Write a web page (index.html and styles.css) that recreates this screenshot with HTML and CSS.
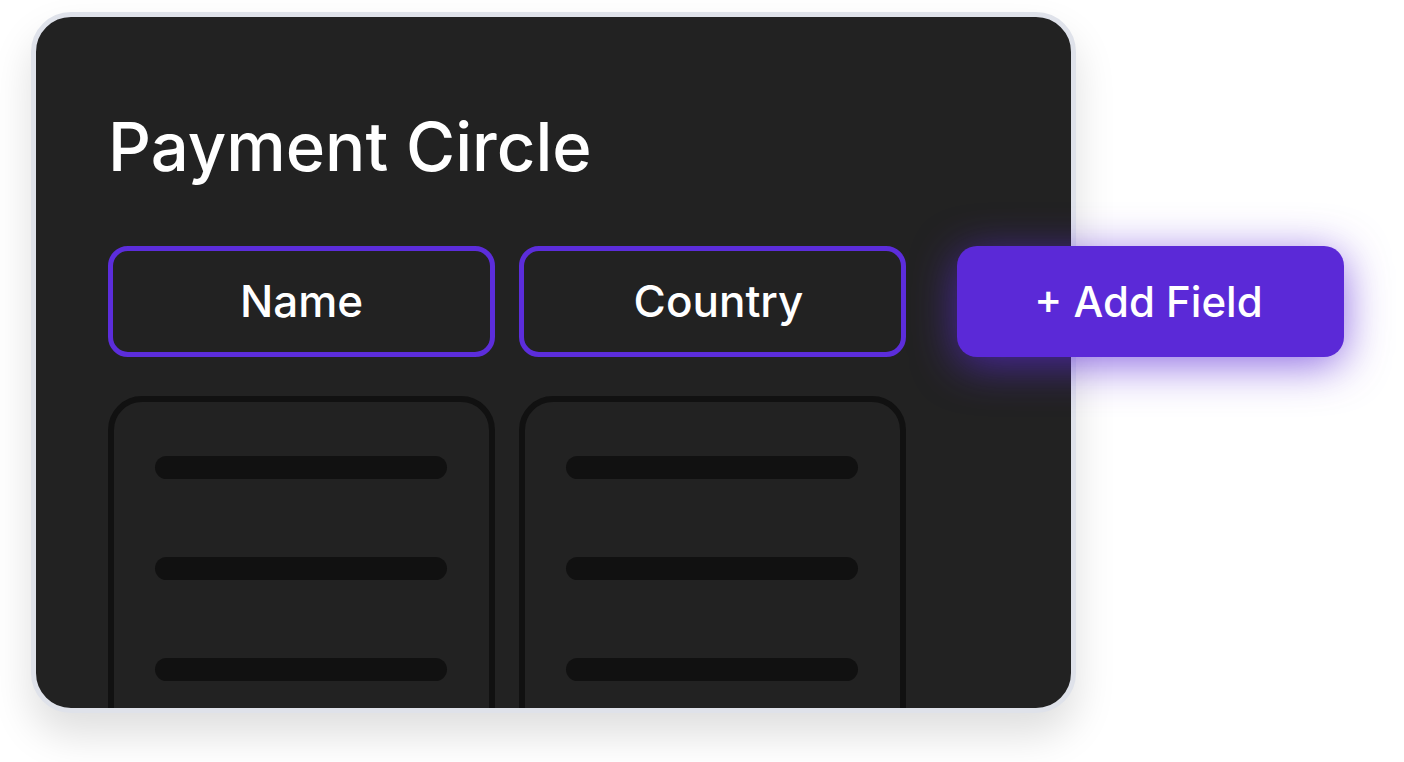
FILE: index.html
```html
<!DOCTYPE html>
<html lang="en">
<head>
<meta charset="utf-8">
<title>Payment Circle</title>
<link rel="stylesheet" href="styles.css">
</head>
<body>
<div class="stage">
  <section class="card">
    <h1 class="title">Payment Circle</h1>
    <div class="fields">
      <div class="field">Name</div>
      <div class="field field-wide">Country</div>
      <button class="add-field">+ Add Field</button>
    </div>
    <div class="lists">
      <div class="list">
        <span class="bar"></span>
        <span class="bar"></span>
        <span class="bar"></span>
      </div>
      <div class="list">
        <span class="bar"></span>
        <span class="bar"></span>
        <span class="bar"></span>
      </div>
    </div>
  </section>
</div>
</body>
</html>
```

FILE: styles.css
```css
* { box-sizing: border-box; }
html, body { margin: 0; padding: 0; background: #ffffff; }
body {
  font-family: "Inter", "Lato", "Liberation Sans", sans-serif;
  width: 1404px;
  height: 762px;
  overflow: hidden;
}
.stage {
  padding: 12px 0 0 31px;
}
.card {
  width: 1045px;
  height: 701px;
  border: 5px solid #dfe2ea;
  border-radius: 40px;
  background: #222222;
  box-shadow: 0 22px 40px rgba(0, 0, 0, 0.13);
  padding: 0 0 0 72px;
  display: flex;
  flex-direction: column;
}
.title {
  margin: 90px 0 0 0;
  height: 80px;
  line-height: 80px;
  font-size: 67px;
  font-weight: 500;
  color: #ffffff;
  letter-spacing: 0;
}
.fields {
  margin-top: 59px;
  display: flex;
  gap: 24px;
  align-items: stretch;
  height: 111px;
}
.field {
  flex: 0 0 387px;
  width: 387px;
  border: 5px solid #5c2ddb;
  border-radius: 20px;
  display: flex;
  align-items: center;
  justify-content: center;
  color: #ffffff;
  font-size: 44px;
  font-weight: 500;
  padding-bottom: 1px;
}
.field-wide {
  padding-left: 12px;
}
.add-field {
  flex: 0 0 387px;
  margin-left: 27px;
  width: 387px;
  border: none;
  border-radius: 20px;
  background: #5b29d7;
  color: #ffffff;
  font-family: inherit;
  font-size: 42px;
  font-weight: 500;
  padding: 0 4px 1px 0;
  box-shadow: 0 8px 44px rgba(91, 41, 215, 0.7);
}
.lists {
  margin-top: 39px;
  flex: 1;
  overflow: hidden;
  display: flex;
  gap: 24px;
}
.list {
  flex: 0 0 387px;
  width: 387px;
  height: 420px;
  border: 6px solid #111111;
  border-radius: 34px;
  padding: 54px 42px 0 41px;
  display: flex;
  flex-direction: column;
  gap: 78px;
}
.bar {
  display: block;
  height: 23px;
  border-radius: 12px;
  background: #111111;
}
```
